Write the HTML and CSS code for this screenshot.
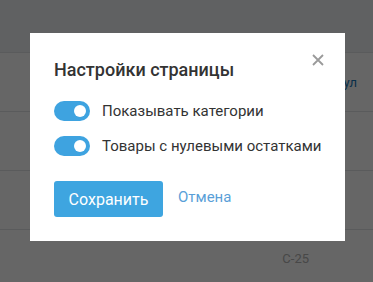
FILE: index.html
```html
<!DOCTYPE html>
<html>
<head>
  <title>Настройки страницы</title>
  <link rel="stylesheet" href="styles.css">
</head>
<body>

  <div class="page">
    <div class="topbar"></div>
    <div class="row"><span class="cell link">Артикул</span></div>
    <div class="row"></div>
    <div class="row"></div>
    <div class="row last"><span class="cell code">C-25</span></div>
  </div>

  <div class="overlay">
    <div class="modal">
      <span class="close">
        <svg width="12" height="12" viewBox="0 0 12 12">
          <path d="M1 1 L11 11 M11 1 L1 11" stroke="#9a9a9a" stroke-width="1.8" fill="none"/>
        </svg>
      </span>
      <h2 class="modal-title">Настройки страницы</h2>

      <label class="option">
        <span class="switch on"><span class="knob"></span></span>
        Показывать категории
      </label>
      <label class="option">
        <span class="switch on"><span class="knob"></span></span>
        Товары с нулевыми остатками
      </label>

      <div class="actions">
        <button class="btn">Сохранить</button>
        <a href="#" class="cancel">Отмена</a>
      </div>
    </div>
  </div>

</body>
</html>
```

FILE: styles.css
```css
body {
  margin: 0;
  font-family: Roboto, "Liberation Sans", sans-serif;
  color: #333;
}

.page {
  background: #fff;
  height: 282px;
  overflow: hidden;
}

.topbar {
  height: 52px;
  background: #f1f2f4;
}

.row {
  height: 58px;
  border-top: 1px solid #e2e3e5;
  display: flex;
  justify-content: flex-end;
  padding-right: 16px;
}

.cell {
  font-size: 13px;
}

.link {
  color: #1677b8;
  margin-top: 22px;
}

.code {
  color: #b3b3b3;
  margin-top: 21px;
  margin-right: 48px;
}

.overlay {
  position: fixed;
  top: 0;
  left: 0;
  right: 0;
  bottom: 0;
  background: rgba(0, 0, 0, 0.6);
  padding: 33px 0 0 30px;
}

.modal {
  position: relative;
  box-sizing: border-box;
  width: 315px;
  background: #fff;
  padding: 26px 20px 24px 24px;
}

.close {
  position: absolute;
  top: 21px;
  right: 21px;
  width: 12px;
  height: 12px;
  cursor: pointer;
}

.close svg {
  display: block;
}

.modal-title {
  margin: 0 0 20px;
  font-size: 18px;
  line-height: 22px;
  font-weight: 500;
  color: #333;
}

.option {
  display: flex;
  align-items: center;
  gap: 12px;
  font-size: 15px;
  color: #333;
  white-space: nowrap;
  margin-bottom: 15px;
}

.option:last-of-type {
  margin-bottom: 25px;
}

.switch {
  position: relative;
  width: 36px;
  height: 20px;
  border-radius: 10px;
  background: #ccc;
  flex-shrink: 0;
}

.switch.on {
  background: #3ea3e0;
}

.knob {
  position: absolute;
  top: 4px;
  left: 4px;
  width: 12px;
  height: 12px;
  border-radius: 50%;
  background: #fff;
}

.switch.on .knob {
  left: 20px;
}

.actions {
  display: flex;
  align-items: center;
  gap: 15px;
}

.btn {
  height: 36px;
  width: 109px;
  padding: 0;
  background: #3ea5e0;
  color: #fff;
  border: none;
  border-radius: 3px;
  font-family: inherit;
  font-size: 16px;
  font-weight: 400;
  cursor: pointer;
}

.cancel {
  color: #5a9fd8;
  text-decoration: none;
  font-size: 15px;
  margin-top: -4px;
}
```
